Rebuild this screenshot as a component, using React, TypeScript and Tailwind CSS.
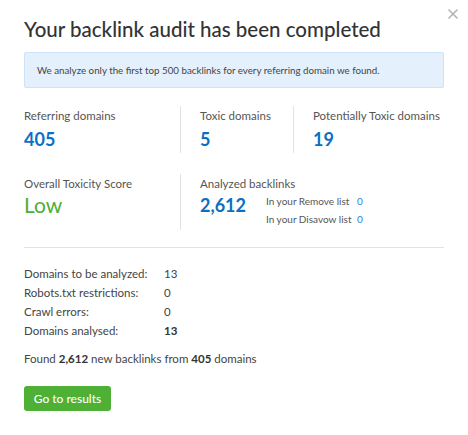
import { X } from "lucide-react";

function Stat({ label, value, className = "" }: { label: string; value: string; className?: string }) {
  return (
    <div className={className}>
      <div className="text-[11.5px] leading-[16px] text-[#555] whitespace-nowrap">{label}</div>
      <div className="mt-[3px] text-[18px] leading-[24px] font-bold text-[#0b6fc4]">{value}</div>
    </div>
  );
}

const rows: ReadonlyArray<[string, string, boolean]> = [
  ["Domains to be analyzed:", "13", false],
  ["Robots.txt restrictions:", "0", false],
  ["Crawl errors:", "0", false],
  ["Domains analysed:", "13", true],
];

export default function App() {
  return (
    <div
      className="relative w-[468px] h-[435px] bg-white px-[24px] pt-[14px] text-[#333]"
      style={{ fontFamily: "Lato, 'Open Sans', sans-serif" }}
    >
      <button className="absolute right-[7px] top-[6px] text-[#b5b5b5]">
        <X size={16} strokeWidth={2.5} />
      </button>

      <h1 className="text-[20.5px] leading-[30px] font-medium text-[#333]">
        Your backlink audit has been completed
      </h1>

      <div className="mt-[8px] h-[36px] flex items-center px-[12px] rounded-[2px] bg-[#e4f1fc] border border-[#cce3f7] text-[9.75px] text-[#444]">
        We analyze only the first top 500 backlinks for every referring domain we found.
      </div>

      <div className="mt-[20px] flex">
        <Stat label="Referring domains" value="405" className="w-[156px]" />
        <div className="w-px bg-[#e2e2e2] my-[-2px]" />
        <Stat label="Toxic domains" value="5" className="w-[112px] pl-[19px]" />
        <div className="w-px bg-[#e2e2e2] my-[-2px]" />
        <Stat label="Potentially Toxic domains" value="19" className="pl-[19px]" />
      </div>

      <div className="mt-[25px] flex">
        <div className="w-[156px]">
          <div className="text-[11.5px] leading-[16px] text-[#555]">Overall Toxicity Score</div>
          <div className="mt-[1px] text-[21px] leading-[24px] text-[#4fae35]">Low</div>
        </div>
        <div className="w-px bg-[#e2e2e2] my-[-2px]" />
        <div className="pl-[19px]">
          <div className="text-[11.5px] leading-[16px] text-[#555]">Analyzed backlinks</div>
          <div className="flex items-start">
            <div className="mt-[1px] w-[66px] text-[18px] leading-[24px] font-bold text-[#0b6fc4]">2,612</div>
            <div className="mt-0 text-[10px] leading-[18px] text-[#555]">
              <div className="flex">
                <span className="w-[91px]">In your Remove list</span>
                <span className="text-[#2b86d6]">0</span>
              </div>
              <div className="flex">
                <span className="w-[91px]">In your Disavow list</span>
                <span className="text-[#2b86d6]">0</span>
              </div>
            </div>
          </div>
        </div>
      </div>

      <div className="mt-[19px] h-px bg-[#e2e2e2]" />

      <div className="mt-[16px] text-[11.5px] leading-[19px] text-[#444]">
        {rows.map(([k, v, b]) => (
          <div key={k} className="flex">
            <span className="w-[140px]">{k}</span>
            <span className={b ? "font-bold text-[#333]" : ""}>{v}</span>
          </div>
        ))}
      </div>

      <div className="mt-[11px] text-[11.5px] leading-[16px] text-[#444]">
        Found <b className="text-[#333]">2,612</b> new backlinks from <b className="text-[#333]">405</b> domains
      </div>

      <button className="mt-[19px] h-[25px] w-[87px] rounded-[3px] bg-[#4eb034] text-white text-[12px] font-medium">
        Go to results
      </button>
    </div>
  );
}
